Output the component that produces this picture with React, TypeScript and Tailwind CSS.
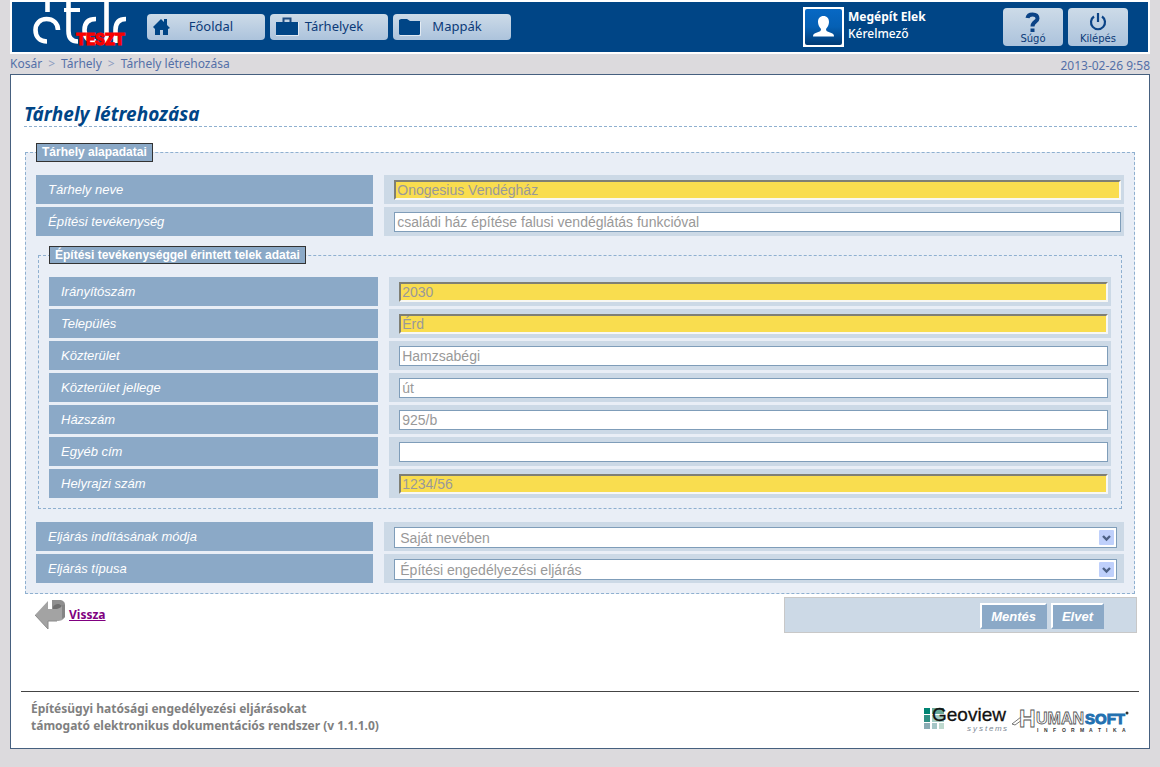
import type { ReactNode } from 'react';

interface Field {
  id: string;
  label: string;
  value: string;
  required?: boolean;
}

const baseFields: Field[] = [
  { id: 'name', label: 'Tárhely neve', value: 'Onogesius Vendégház', required: true },
  { id: 'activity', label: 'Építési tevékenység', value: 'családi ház építése falusi vendéglátás funkcióval' },
];

const plotFields: Field[] = [
  { id: 'zip', label: 'Irányítószám', value: '2030', required: true },
  { id: 'city', label: 'Település', value: 'Érd', required: true },
  { id: 'street', label: 'Közterület', value: 'Hamzsabégi' },
  { id: 'streetType', label: 'Közterület jellege', value: 'út' },
  { id: 'houseNumber', label: 'Házszám', value: '925/b' },
  { id: 'otherAddress', label: 'Egyéb cím', value: '' },
  { id: 'lotNumber', label: 'Helyrajzi szám', value: '1234/56', required: true },
];

const procedureFields: Field[] = [
  { id: 'startMode', label: 'Eljárás indításának módja', value: 'Saját nevében' },
  { id: 'procedureType', label: 'Eljárás típusa', value: 'Építési engedélyezési eljárás' },
];

const Logo = () => (
  <div className="relative h-[50px] w-[135px] shrink-0">
    <svg width="120" height="50" viewBox="0 0 120 50" fill="none" stroke="#fff" strokeWidth="4.600" aria-hidden="true">
      <path d="M35.500 0V10" />
      <path d="M46 28C46 21 41 17 34.500 17C28 17 23.500 21.500 23.500 28C23.500 35 28 39.500 35 39.500" />
      <path d="M56.500 0V29C56.500 36 60 39.500 66 39.500" />
      <path d="M52 8H68" strokeWidth="4" />
      <path d="M84 17C76 17 72.500 21 72.500 28C72.500 35 76 39.500 84 39.500" />
      <path d="M94.500 0V41" />
      <path d="M114 17C107 17 103.500 21 103.500 28V41" />
    </svg>
    <span className="absolute left-[64px] top-[28px] font-[Roboto,sans-serif] text-[16px] font-black leading-5 text-[#f80000] [-webkit-text-stroke:1px_#f80000]">
      TESZT
    </span>
  </div>
);

const HomeIcon = () => (
  <svg width="18" height="20" viewBox="0 0 18 20" aria-hidden="true">
    <path d="M0 10L8 2L11 5V2H14V8L17 11L15 12V18H10V13H7V18H2V12Z" fill="#004586" />
  </svg>
);

const BriefcaseIcon = () => (
  <svg width="23" height="20" viewBox="0 0 23 20" aria-hidden="true">
    <path d="M0 5H22V18H0Z" fill="#004586" />
    <path d="M7.500 5V1.500H14.500V5" fill="none" stroke="#1d4a80" strokeWidth="2" />
    <path d="M0 18.500H22.500V5" fill="none" stroke="#fff" opacity=".6" />
  </svg>
);

const FolderIcon = () => (
  <svg width="23" height="20" viewBox="0 0 23 20" aria-hidden="true">
    <path d="M0 3L2 2H8L11 4H21V17L20 18H1L0 17Z" fill="#004586" />
    <path d="M1 18.500H21.500V5" fill="none" stroke="#fff" opacity=".6" />
  </svg>
);

const Avatar = () => (
  <svg width="41" height="40" viewBox="0 0 41 40" className="shrink-0" aria-hidden="true">
    <defs>
      <linearGradient id="avatarBg" x1="0" y1="0" x2="0" y2="1">
        <stop offset="0" stopColor="#0768c4" />
        <stop offset=".5" stopColor="#0560b4" />
        <stop offset="1" stopColor="#003a74" />
      </linearGradient>
    </defs>
    <rect width="41" height="40" fill="#fff" />
    <rect x="2" y="2" width="37" height="36" rx="2" fill="url(#avatarBg)" />
    <path
      d="M20.500 9C24 9 26 11.500 26 15C26 18 24.500 20 23 22C23 24 24 24.500 27 25.500C30 26.500 31 27 31 29.500H10C10 27 11 26.500 14 25.500C17 24.500 18 24 18 22C16.500 20 15 18 15 15C15 11.500 17 9 20.500 9Z"
      fill="#fff"
    />
  </svg>
);

const HelpIcon = () => (
  <svg width="20" height="21" viewBox="0 0 20 21" fill="none" aria-hidden="true">
    <path d="M4.500 6C5 3 7 2.500 9.500 2.500C13 2.500 14.500 4 14.500 6.500C14.500 10 9.500 9.500 9.500 14.500" stroke="#0b4386" strokeWidth="4" />
    <rect x="7.500" y="16.500" width="4" height="3.500" fill="#0b4386" />
  </svg>
);

const PowerIcon = () => (
  <svg width="20" height="21" viewBox="0 0 20 21" fill="none" stroke="#0b4386" strokeWidth="2.200" aria-hidden="true">
    <path d="M6 4.500A7 7 0 1 0 14 4.500" />
    <path d="M10 1V10" />
  </svg>
);

const BackIcon = () => (
  <svg width="31" height="31" viewBox="0 0 31 31" aria-hidden="true">
    <path d="M17 1H24C28 1 30 3 30 6V18L26 20L18 12L17 10Z" fill="#8f8f8f" />
    <path d="M18 9C18 6 21 5 24 5L27 7L25 10L18 12Z" fill="#6f6f6f" />
    <path d="M0 16L13 2V10H20C24 10 27 8 27 6L30 7V17C29 21 26 22 22 22H13V30Z" fill="#a3a3a3" />
    <path d="M27 6V20L30 18V6Z" fill="#858585" />
    <path d="M0 16L13 30V22H22" fill="none" stroke="#8a8a8a" />
  </svg>
);

const GeoviewLogo = () => (
  <svg width="86" height="26" viewBox="0 0 86 26" className="overflow-visible" role="img" aria-label="Geoview systems">
    <rect x="1" y="2" width="6" height="6" fill="#008473" />
    <rect x="9" y="2" width="12" height="6" fill="#6ba99c" />
    <rect x="1" y="9" width="6" height="7" fill="#2f8f83" />
    <rect x="9" y="9" width="12" height="7" fill="#a5cdc4" />
    <rect x="1" y="17" width="6" height="6" fill="#8aabb4" />
    <rect x="9" y="17" width="5" height="6" fill="#a5c6c6" />
    <rect x="16" y="17" width="5" height="6" fill="#bed9ce" />
    <text x="9" y="15" fill="#111" stroke="#111" strokeWidth=".3" className="font-['Liberation_Sans',sans-serif] text-[19px]">
      Geoview
    </text>
    <text x="44 50 56 62 66 72 80" y="25" fill="#7b8794" className="font-['Liberation_Sans',sans-serif] text-[8px] italic">
      systems
    </text>
  </svg>
);

const HumansoftLogo = () => (
  <svg width="118" height="26" viewBox="0 0 118 26" className="overflow-visible" role="img" aria-label="Humansoft Informatika">
    <path d="M0 18L9 11H22L20 14H10L3 19Z" fill="#fff" stroke="#555" strokeWidth=".8" />
    <text x="7" y="21" fill="#fff" stroke="#555" strokeWidth=".8" className="font-['Liberation_Sans',sans-serif] text-[23px] font-bold">
      H
    </text>
    <text x="24" y="18" fill="#fff" stroke="#555" strokeWidth=".8" className="font-['Liberation_Sans',sans-serif] text-[16px] font-bold">
      UMAN
    </text>
    <text x="73" y="18" fill="#2270b0" stroke="#2270b0" className="font-['Liberation_Sans',sans-serif] text-[15px] font-bold">
      SOFT
    </text>
    <circle cx="115" cy="7" r="1.500" fill="#333" />
    <text
      x="25 32 41 50 59 68 77 86 94 101 110"
      y="26"
      fill="#333"
      className="font-['Liberation_Sans',sans-serif] text-[5px] font-bold"
    >
      INFORMATIKA
    </text>
  </svg>
);

const NavButton = ({ icon, label }: { icon: ReactNode; label: string }) => (
  <button className="flex h-[26px] w-[118px] items-center rounded bg-linear-to-b from-[#cddbe8] to-[#acc3dc] pl-[6px] text-[#0b3a78]">
    <span className="w-6">{icon}</span>
    <span className="flex-1 pr-5 text-center font-['Noto_Sans',sans-serif] text-[13px]">{label}</span>
  </button>
);

const ToolButton = ({ icon, label }: { icon: ReactNode; label: string }) => (
  <button className="flex h-[38px] w-[60px] flex-col items-center rounded-sm bg-linear-to-b from-[#cddbe8] to-[#acc3dc] pt-1 text-[#0b3a78]">
    {icon}
    <span className="font-['DejaVu_Sans',sans-serif] text-[10px] leading-3">{label}</span>
  </button>
);

const Row = ({ id, label, children }: { id: string; label: string; children: ReactNode }) => (
  <div className="flex h-[29px] gap-[11px]">
    <label
      htmlFor={id}
      className="flex w-[31%] shrink-0 items-center bg-[#8ba9c7] pl-3 text-[13px] italic text-white"
    >
      {label}
    </label>
    <div className="flex flex-1 items-center bg-[#ccd9e6] pl-[10px] pr-[3px]">{children}</div>
  </div>
);

const TextRow = ({ field }: { field: Field }) => (
  <Row id={field.id} label={field.label}>
    <input
      id={field.id}
      type="text"
      defaultValue={field.value}
      className={
        field.required
          ? 'h-5 w-full border-2 border-b-[#f8f8f4] border-l-[#7f7f74] border-r-[#f8f8f4] border-t-[#7f7f74] bg-[#f9dd4f] px-px text-[14px] leading-4 text-[#999] outline-none'
          : 'h-5 w-full border border-[#7f9db9] bg-white px-[2px] pt-px text-[14px] leading-4 text-[#999] outline-none'
      }
    />
  </Row>
);

const SelectRow = ({ field }: { field: Field }) => (
  <Row id={field.id} label={field.label}>
    <div className="relative mr-1 mt-[2px] flex flex-1">
      <select
        id={field.id}
        className="h-[21px] w-full appearance-none border border-[#7f9db9] bg-white px-[5px] pt-px text-[14px] leading-[18px] text-[#999] outline-none"
      >
        <option>{field.value}</option>
      </select>
      <svg
        width="15"
        height="15"
        viewBox="0 0 15 15"
        className="pointer-events-none absolute right-[3px] top-[3px]"
        aria-hidden="true"
      >
        <rect width="15" height="15" rx="1" fill="#bfd0fb" />
        <path d="M4 6L7.500 9.500L11 6" fill="none" stroke="#4d6185" strokeWidth="2.400" />
      </svg>
    </div>
  </Row>
);

const Header = () => (
  <header className="flex h-[54px] border-2 border-white bg-[#004586] pr-5">
    <Logo />
    <nav className="mt-3 flex gap-[5px]">
      <NavButton icon={<HomeIcon />} label="Főoldal" />
      <NavButton icon={<BriefcaseIcon />} label="Tárhelyek" />
      <NavButton icon={<FolderIcon />} label="Mappák" />
    </nav>
    <div className="ml-auto mt-[5px] flex w-[200px] gap-1">
      <Avatar />
      <div className="pt-px font-['Noto_Sans',sans-serif] text-[12px] leading-[17px] text-white">
        <p className="font-bold">Megépít Elek</p>
        <p className="font-medium">Kérelmező</p>
      </div>
    </div>
    <div className="mt-[6px] flex gap-[5px]">
      <ToolButton icon={<HelpIcon />} label="Súgó" />
      <ToolButton icon={<PowerIcon />} label="Kilépés" />
    </div>
  </header>
);

const Breadcrumb = () => (
  <div className="flex h-5 justify-between font-['Noto_Sans',sans-serif] text-[12px] leading-5 text-[#5470a8]">
    <nav className="flex gap-[6px]">
      <a href="#kosar">Kosár</a>
      <span className="text-[#8d9cbf]">&gt;</span>
      <a href="#tarhely">Tárhely</a>
      <span className="text-[#8d9cbf]">&gt;</span>
      <a href="#letrehozas">Tárhely létrehozása</a>
    </nav>
    <span className="pt-[2px]">2013-02-26 9:58</span>
  </div>
);

const legendClass = 'border border-[#333] bg-[#8ba9c7] px-[5px] text-[12px] font-bold text-white';
const actionClass =
  'h-[26px] border-2 border-b-[#8ba9c7] border-l-white border-r-[#8ba9c7] border-t-white bg-[#8ba9c7] px-[9px] pt-[2px] text-[13px] font-bold italic leading-5 text-white';

const App = () => {
  return (
    <div className="min-h-screen bg-[#dcdadd] px-[10px] pb-[18px] font-['Liberation_Sans',sans-serif]">
      <Header />
      <Breadcrumb />

      <main className="border border-[#46607f] bg-white px-[10px] pb-[14px]">
        <form className="pl-[3px] pr-[2px]">
          <h1 className="border-b border-dashed border-[#8fb0d0] pt-[27px] font-['Noto_Sans',sans-serif] text-[19px] font-bold italic leading-6 text-[#004586]">
            Tárhely létrehozása
          </h1>

          <fieldset className="ml-px mr-[2px] mt-4 border border-dashed border-[#8fb0d0] bg-[#e9eef6] px-[10px] pb-[10px]">
            <legend className={`${legendClass} h-[19px] leading-[17px]`}>Tárhely alapadatai</legend>
            <div className="mt-[13px] flex flex-col gap-[3px]">
              {baseFields.map(field => (
                <TextRow key={field.id} field={field} />
              ))}
            </div>

            <fieldset className="mx-[2px] mt-[10px] border border-dashed border-[#8fb0d0] px-[10px] pb-[10px]">
              <legend className={`${legendClass} h-[18px] leading-4`}>
                Építési tevékenységgel érintett telek adatai
              </legend>
              <div className="mt-[13px] flex flex-col gap-[3px]">
                {plotFields.map(field => (
                  <TextRow key={field.id} field={field} />
                ))}
              </div>
            </fieldset>

            <div className="mt-[13px] flex flex-col gap-[3px]">
              {procedureFields.map(field => (
                <SelectRow key={field.id} field={field} />
              ))}
            </div>
          </fieldset>

          <div className="mt-[3px] flex items-start justify-between">
            <a href="#vissza" className="flex items-center gap-[3px] pl-[11px] pt-[2px] font-['Noto_Sans',sans-serif] text-[12px] font-bold text-[#800080] underline">
              <BackIcon />
              Vissza
            </a>
            <div className="flex h-9 w-[353px] items-center justify-end gap-1 border border-[#c8c8c8] bg-[#ccd9e6] pr-8 pt-px">
              <button type="button" className={actionClass}>Mentés</button>
              <button type="button" className={actionClass}>Elvet</button>
            </div>
          </div>
        </form>

        <footer className="mt-[58px] flex items-start justify-between border-t border-[#444] pl-[10px] pr-[9px] pt-2">
          <p className="font-['Noto_Sans',sans-serif] text-[12px] font-bold leading-[17px] text-[#808080]">
            Építésügyi hatósági engedélyezési eljárásokat
            <br />
            támogató elektronikus dokumentációs rendszer (v 1.1.1.0)
          </p>
          <div className="flex gap-[3px] pt-[6px]">
            <GeoviewLogo />
            <HumansoftLogo />
          </div>
        </footer>
      </main>
    </div>
  );
};

export default App;
